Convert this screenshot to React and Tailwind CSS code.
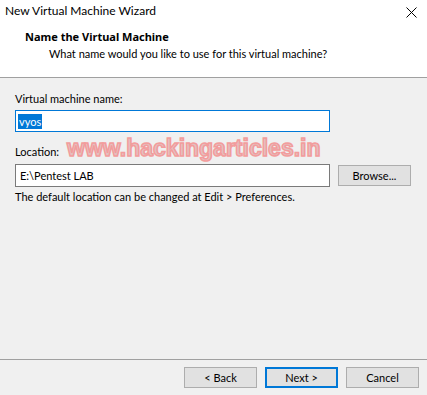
export default function App() {
  return (
    <div className="w-[427px] h-[395px] flex flex-col bg-[#f0f0f0] font-['Lato',sans-serif] text-[11px] leading-[16px] text-black overflow-hidden">
      {/* header */}
      <div className="bg-white h-[78px] border-b border-[#a0a0a0] flex flex-col">
        <div className="flex items-start justify-between pl-[5px] pr-[10px] pt-[3px]">
          <span className="text-[12px]">New Virtual Machine Wizard</span>
          <svg width="11" height="11" viewBox="0 0 11 11" className="mt-[4px]">
            <path d="M0.5 0.5 L10.5 10.5 M10.5 0.5 L0.5 10.5" stroke="#000" strokeWidth="1" />
          </svg>
        </div>
        <div className="pl-[25px] mt-[10px] font-['Noto_Sans',sans-serif] font-bold">Name the Virtual Machine</div>
        <div className="pl-[49px] mt-[1px]">What name would you like to use for this virtual machine?</div>
      </div>

      {/* body */}
      <div className="flex-1 relative px-[15px] pt-[13px]">
        <div>Virtual machine name:</div>
        <div className="mt-[3px] w-[315px] h-[22px] bg-white border border-[#0078d7] flex items-center pl-[2px]">
          <span className="bg-[#0078d7] text-white px-[1px] leading-[15px]">vyos</span>
        </div>

        <div className="mt-[12px]">Location:</div>
        <div className="mt-[4px] flex items-start gap-[8px]">
          <div className="w-[315px] h-[23px] bg-white border border-[#7a7a7a] flex items-center pl-[4px]">
            E:\Pentest LAB
          </div>
          <button className="mt-[1px] w-[73px] h-[21px] bg-[#e1e1e1] border border-[#adadad] flex items-center justify-center">
            Browse...
          </button>
        </div>
        <div className="mt-[2px]">The default location can be changed at Edit &gt; Preferences.</div>

        {/* watermark */}
        <div className="absolute left-[67px] top-[58px] font-['Liberation_Sans',sans-serif] font-bold text-[23px] leading-[24px] text-[#e2c0c0] [-webkit-text-stroke:1.5px_#f39c9c] pointer-events-none">
          www.hackingarticles.in
        </div>
      </div>

      {/* footer */}
      <div className="border-t border-[#a0a0a0] h-[36px] flex justify-end gap-[8px] pt-[7px] pr-[8px]">
        <button className="w-[73px] h-[21px] bg-[#e1e1e1] border border-[#adadad] flex items-center justify-center">
          &lt; Back
        </button>
        <button className="w-[73px] h-[21px] bg-[#e1e1e1] border-2 border-[#0078d7] flex items-center justify-center">
          Next &gt;
        </button>
        <button className="w-[73px] h-[21px] bg-[#e1e1e1] border border-[#adadad] flex items-center justify-center">
          Cancel
        </button>
      </div>
    </div>
  );
}
